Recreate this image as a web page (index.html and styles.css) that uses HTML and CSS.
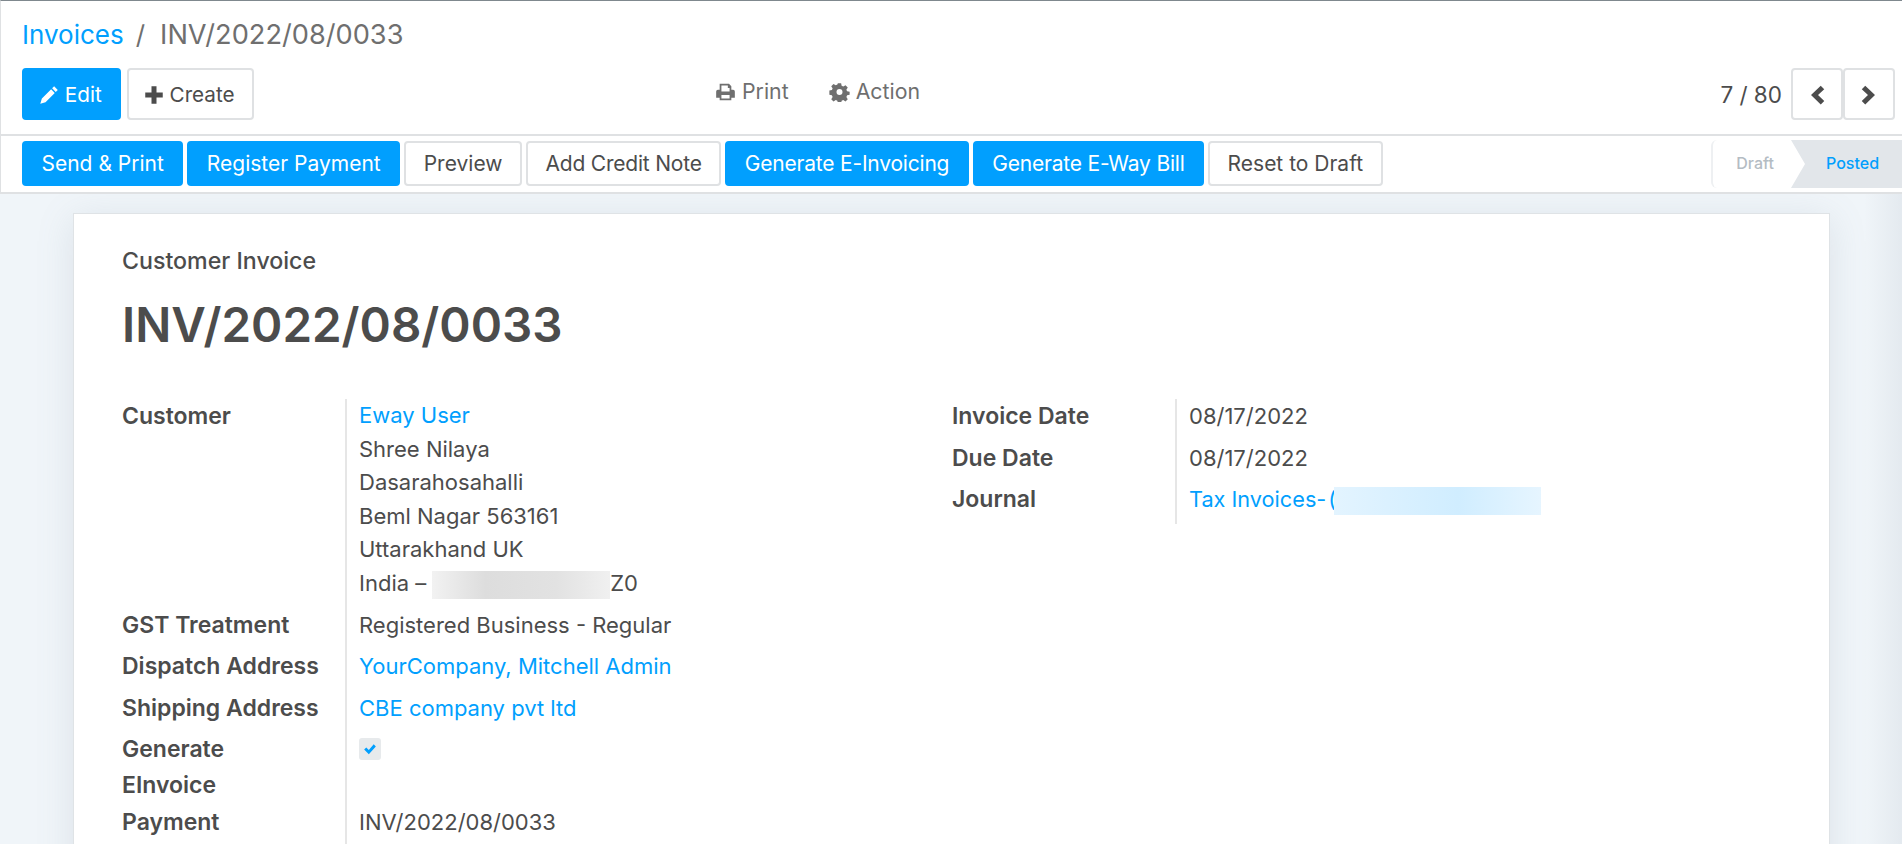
FILE: index.html
```html
<!DOCTYPE html>
<html lang="en">
<head>
    <meta charset="UTF-8">
    <title>INV/2022/08/0033</title>
    <link rel="stylesheet" href="styles.css">
</head>
<body>

    <div class="control-panel">
        <div class="breadcrumb">
            <a class="crumb-link">Invoices</a>
            <span class="crumb-sep">/</span>
            <span class="crumb-current">INV/2022/08/0033</span>
        </div>

        <div class="panel-row">
            <div class="main-buttons">
                <button class="btn btn-primary btn-tall">
                    <svg class="icon" viewBox="0 0 16 16"><path d="M12.100 1 15 3.900 13.400 5.500 10.500 2.600ZM9.700 3.400 12.600 6.300 5.200 13.700 1 15 2.300 10.800Z" fill="currentColor"/></svg>
                    Edit
                </button>
                <button class="btn btn-tall">
                    <svg class="icon" viewBox="0 0 16 16"><path d="M6 1h4v5h5v4h-5v5H6v-5H1V6h5Z" fill="currentColor"/></svg>
                    Create
                </button>
            </div>

            <div class="side-actions">
                <span class="side-action">
                    <svg class="icon icon-side" viewBox="0 0 18 16"><path d="M4 1h8l2 2v3h1.500A1.500 1.500 0 0 1 17 7.500V13h-3v2H4v-2H1V7.500A1.500 1.500 0 0 1 2.500 6H4ZM5.500 2.500V7.500h7V4.500H11v-2ZM5.500 10.500v3h7v-3Z" fill="currentColor" fill-rule="evenodd"/></svg>
                    Print
                </span>
                <span class="side-action">
                    <svg class="icon icon-side" viewBox="0 0 16 16"><path d="M6.700 1h2.600l.4 2 1.300.6 1.800-1.100 1.800 1.800-1.100 1.800.6 1.300 2 .4v2.400l-2 .4-.6 1.300 1.100 1.800-1.800 1.800-1.800-1.100-1.300.6-.4 2H6.700l-.4-2-1.300-.6-1.800 1.100-1.800-1.800 1.100-1.800-.6-1.300-2-.4V6.800l2-.4.6-1.300-1.100-1.800 1.800-1.800 1.800 1.100 1.300-.6ZM8 5.600a2.400 2.400 0 1 0 0 4.800 2.400 2.400 0 0 0 0-4.800Z" fill="currentColor" fill-rule="evenodd"/></svg>
                    Action
                </span>
            </div>

            <div class="pager">
                <span class="pager-count">7 / 80</span>
                <button class="btn btn-tall pager-btn">
                    <svg class="icon icon-pager" viewBox="0 0 16 16"><path d="M11 .500 13.800 3.300 8.800 8l5 4.700L11 15.500 3.200 8Z" fill="currentColor"/></svg>
                </button>
                <button class="btn btn-tall pager-btn">
                    <svg class="icon icon-pager" viewBox="0 0 16 16"><path d="M5 .500 2.200 3.300 7.200 8l-5 4.700L5 15.500 12.800 8Z" fill="currentColor"/></svg>
                </button>
            </div>
        </div>
    </div>

    <div class="status-row">
        <div class="status-buttons">
            <button class="btn btn-primary">Send &amp; Print</button>
            <button class="btn btn-primary">Register Payment</button>
            <button class="btn">Preview</button>
            <button class="btn btn-tight">Add Credit Note</button>
            <button class="btn btn-primary btn-tight">Generate E-Invoicing</button>
            <button class="btn btn-primary btn-tight">Generate E-Way Bill</button>
            <button class="btn">Reset to Draft</button>
        </div>
        <div class="statusbar">
            <span class="status-step">Draft</span>
            <span class="status-step status-active">Posted</span>
        </div>
    </div>

    <div class="form-view">
        <div class="sheet">
            <div class="sheet-kind">Customer Invoice</div>
            <h1>INV/2022/08/0033</h1>

            <div class="groups">
                <div class="group">
                    <div class="field">
                        <div class="field-label">Customer</div>
                        <div class="field-value address">
                            <a class="link">Eway User</a><br>
                            Shree Nilaya<br>
                            Dasarahosahalli<br>
                            Beml Nagar 563161<br>
                            Uttarakhand UK<br>
                            India –<span class="redact redact-grey"></span>Z0
                        </div>
                    </div>
                    <div class="field">
                        <div class="field-label">GST Treatment</div>
                        <div class="field-value">Registered Business - Regular</div>
                    </div>
                    <div class="field">
                        <div class="field-label">Dispatch Address</div>
                        <div class="field-value"><a class="link">YourCompany, Mitchell Admin</a></div>
                    </div>
                    <div class="field">
                        <div class="field-label">Shipping Address</div>
                        <div class="field-value"><a class="link">CBE company pvt ltd</a></div>
                    </div>
                    <div class="field field-tall">
                        <div class="field-label">Generate<br>EInvoice</div>
                        <div class="field-value">
                            <span class="checkbox">
                                <svg viewBox="0 0 12 12"><path d="M1 6.500 2.800 4.700l2.200 2.200 4.200-4.900L11 3.800 5 10.500Z" fill="currentColor"/></svg>
                            </span>
                        </div>
                    </div>
                    <div class="field">
                        <div class="field-label">Payment</div>
                        <div class="field-value">INV/2022/08/0033</div>
                    </div>
                </div>

                <div class="group">
                    <div class="field">
                        <div class="field-label">Invoice Date</div>
                        <div class="field-value">08/17/2022</div>
                    </div>
                    <div class="field">
                        <div class="field-label">Due Date</div>
                        <div class="field-value">08/17/2022</div>
                    </div>
                    <div class="field">
                        <div class="field-label">Journal</div>
                        <div class="field-value"><a class="link journal-link">Tax Invoices-&hairsp;(</a><span class="redact redact-blue"></span></div>
                    </div>
                </div>
            </div>
        </div>
    </div>

</body>
</html>
```

FILE: styles.css
```css
html, body {
    height: 100%;
}

body {
    margin: 0;
    overflow: hidden;
    background-color: #f0f5f9;
    color: #4c4c4c;
    font-family: 'Inter', 'Liberation Sans', sans-serif;
    font-size: 21px;
}

.control-panel {
    height: 133px;
    background: white;
    border-top: 1px solid #7f888e;
    border-bottom: 2px solid #dfe1e3;
    border-left: 1px solid #dfe1e3;
    padding: 0 7px 0 21px;
}

.breadcrumb {
    height: 67px;
    display: flex;
    align-items: center;
    gap: 12px;
    font-size: 26px;
}

.crumb-link, .link {
    color: #019ffe;
}

.crumb-current, .crumb-sep {
    color: #6f6f6f;
}

.crumb-current {
    font-size: 27.2px;
    margin-left: 3px;
}

.panel-row {
    display: flex;
    align-items: flex-start;
}

.main-buttons {
    display: flex;
    gap: 6px;
    width: 693px;
}

.btn {
    height: 45px;
    padding: 0 17.5px;
    background: white;
    border: 2px solid #dfe1e3;
    border-radius: 4px;
    color: #4c4c4c;
    font: inherit;
    white-space: nowrap;
}

.btn-primary {
    background: #019ffe;
    border-color: #019ffe;
    color: white;
}

.btn-tall {
    height: 52px;
    padding: 0 17px;
    font-size: 20.7px;
}

.btn-tight {
    letter-spacing: -0.2px;
}

.icon {
    width: 20px;
    height: 20px;
    margin-left: -2px;
    vertical-align: -3px;
}

.icon-side {
    width: 21px;
    height: 20px;
    margin-left: 0;
}

.icon-pager {
    width: 20px;
    height: 20px;
    margin-left: 0;
}

.side-actions {
    display: flex;
    gap: 40px;
    color: #6f6f6f;
    padding-top: 10px;
    font-size: 21.3px;
}

.pager {
    display: flex;
    align-items: center;
    margin-left: auto;
}

.pager-count {
    margin-right: 9px;
    font-size: 22.5px;
}

.pager-btn {
    width: 52px;
    padding: 0;
}

.status-row {
    position: relative;
    height: 56px;
    background: white;
    border-bottom: 2px solid #dfe1e3;
    border-left: 1px solid #dfe1e3;
    padding-left: 21px;
    display: flex;
    justify-content: space-between;
    align-items: flex-start;
}

.status-buttons {
    display: flex;
    gap: 4px;
    padding-top: 5px;
}

.statusbar {
    display: flex;
    height: 48px;
    margin-top: 4px;
    font-size: 16px;
    font-weight: 500;
    border-left: 2px solid #eef0f2;
    border-radius: 6px 0 0 6px;
}

.status-step {
    display: flex;
    align-items: center;
    padding: 0 17px 2px 23px;
    color: #b4bcc3;
}

.status-active {
    width: 111px;
    box-sizing: border-box;
    padding: 0 0 2px 35px;
    color: #019ffe;
    background: #e2e6ea;
    clip-path: polygon(0 0, 100% 0, 100% 100%, 0 100%, 14px 50%);
}

.form-view {
    padding: 19px 72px 0 73px;
    background: linear-gradient(90deg, transparent 98%, rgba(120, 135, 155, 0.1));
}

.sheet {
    height: 640px;
    background: white;
    border: 1px solid #dfe3e6;
    box-shadow: 0 6px 34px rgba(120, 135, 155, 0.17);
    padding: 33px 48px 0;
}

.sheet-kind {
    font-size: 23.2px;
    font-weight: 500;
}

h1 {
    font-size: 47.5px;
    font-weight: 600;
    margin: 21px 0 46.4px;
}

.groups {
    display: grid;
    grid-template-columns: 830px 1fr;
}

.group {
    align-self: start;
}

.field {
    display: grid;
    grid-template-columns: 223px 1fr;
}

.field-label {
    font-size: 23px;
    font-weight: 600;
    line-height: 34px;
    padding-bottom: 7.5px;
}

.field-value {
    border-left: 2px solid #e6e6e6;
    padding: 0 0 7.5px 12px;
    font-size: 22px;
    line-height: 34px;
}

.address {
    line-height: 33.5px;
}

.field-tall .field-label {
    line-height: 36px;
    margin-top: -1px;
    padding-bottom: 2px;
}

.journal-link {
    font-size: 21.7px;
}

.redact {
    display: inline-block;
    vertical-align: middle;
    height: 28px;
}

.redact-grey {
    width: 178px;
    margin-left: 6px;
    background: linear-gradient(90deg, #f2f2f2, #dddddd 30%, #e2e2e2 70%, #f0f0f0);
}

.redact-blue {
    width: 207px;
    margin-left: -2px;
    background: linear-gradient(90deg, #e3f4ff, #d0edff 60%, #e6f5ff);
}

.checkbox {
    display: inline-flex;
    align-items: center;
    justify-content: center;
    width: 22px;
    height: 22px;
    background: #e7eaec;
    border-radius: 3px;
    color: #019ffe;
    vertical-align: 1px;
}

.checkbox svg {
    width: 14px;
    height: 14px;
}
```
